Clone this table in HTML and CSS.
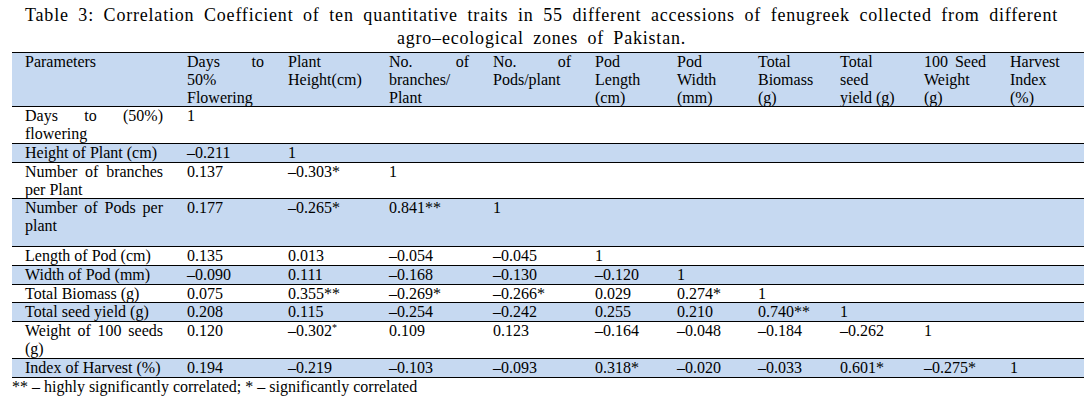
FILE: index.html
```html
<!DOCTYPE html>
<html lang="en">
<head>
<meta charset="utf-8">
<title>Table 3: Correlation Coefficient</title>
<link rel="stylesheet" href="styles.css">
</head>
<body>
<div class="title">
  <span class="title-l1">Table 3: Correlation Coefficient of ten quantitative traits in 55 different accessions of fenugreek collected from different</span>
  <span class="title-l2">agro–ecological zones of Pakistan.</span>
</div>
<table class="corr">
  <colgroup>
    <col class="c1"><col class="c2"><col class="c3"><col class="c4"><col class="c5"><col class="c6"><col class="c7"><col class="c8"><col class="c9"><col class="c10"><col class="c11">
  </colgroup>
  <thead>
    <tr class="shade">
      <th>Parameters</th>
      <th>Days to 50% Flowering</th>
      <th>Plant Height(cm)</th>
      <th>No. of branches/ Plant</th>
      <th>No. of Pods/plant</th>
      <th>Pod Length (cm)</th>
      <th>Pod Width (mm)</th>
      <th>Total Biomass (g)</th>
      <th>Total seed yield (g)</th>
      <th>100 Seed Weight (g)</th>
      <th>Harvest Index (%)</th>
    </tr>
  </thead>
  <tbody>
    <tr>
      <td>Days to (50%) flowering</td><td>1</td><td></td><td></td><td></td><td></td><td></td><td></td><td></td><td></td><td></td>
    </tr>
    <tr class="shade">
      <td>Height of Plant (cm)</td><td>–0.211</td><td>1</td><td></td><td></td><td></td><td></td><td></td><td></td><td></td><td></td>
    </tr>
    <tr>
      <td>Number of branches per Plant</td><td>0.137</td><td>–0.303*</td><td>1</td><td></td><td></td><td></td><td></td><td></td><td></td><td></td>
    </tr>
    <tr class="shade tall">
      <td>Number of Pods per plant</td><td>0.177</td><td>–0.265*</td><td>0.841**</td><td>1</td><td></td><td></td><td></td><td></td><td></td><td></td>
    </tr>
    <tr>
      <td>Length of Pod (cm)</td><td>0.135</td><td>0.013</td><td>–0.054</td><td>–0.045</td><td>1</td><td></td><td></td><td></td><td></td><td></td>
    </tr>
    <tr class="shade">
      <td>Width of Pod (mm)</td><td>–0.090</td><td>0.111</td><td>–0.168</td><td>–0.130</td><td>–0.120</td><td>1</td><td></td><td></td><td></td><td></td>
    </tr>
    <tr>
      <td>Total Biomass (g)</td><td>0.075</td><td>0.355**</td><td>–0.269*</td><td>–0.266*</td><td>0.029</td><td>0.274*</td><td>1</td><td></td><td></td><td></td>
    </tr>
    <tr class="shade">
      <td>Total seed yield (g)</td><td>0.208</td><td>0.115</td><td>–0.254</td><td>–0.242</td><td>0.255</td><td>0.210</td><td>0.740**</td><td>1</td><td></td><td></td>
    </tr>
    <tr>
      <td>Weight of 100 seeds (g)</td><td>0.120</td><td>–0.302<sup class="sup">*</sup></td><td>0.109</td><td>0.123</td><td>–0.164</td><td>–0.048</td><td>–0.184</td><td>–0.262</td><td>1</td><td></td>
    </tr>
    <tr class="shade">
      <td>Index of Harvest (%)</td><td>0.194</td><td>–0.219</td><td>–0.103</td><td>–0.093</td><td>0.318*</td><td>–0.020</td><td>–0.033</td><td>0.601*</td><td>–0.275*</td><td>1</td>
    </tr>
  </tbody>
</table>
<p class="note">** – highly significantly correlated; * – significantly correlated</p>
</body>
</html>
```
FILE: styles.css
```css
html, body {
  margin: 0;
  padding: 0;
  background: #ffffff;
}

body {
  font-family: "Liberation Serif", "Times New Roman", serif;
  color: #000000;
}

.title {
  margin: 4px 0 0 25px;
  width: 1033px;
  font-size: 18px;
  line-height: 23px;
  letter-spacing: 0.8px;
}

.title-l1 {
  display: block;
  white-space: nowrap;
  text-align: justify;
  text-align-last: justify;
}

.title-l2 {
  display: block;
  text-align: center;
  word-spacing: 4px;
}

.corr {
  margin: 2px 0 0 12px;
  width: 1072px;
  table-layout: fixed;
  border-collapse: collapse;
  font-size: 16px;
  line-height: 17.8px;
}

.c1 { width: 163px; }
.c2 { width: 101px; }
.c3 { width: 101px; }
.c4 { width: 104px; }
.c5 { width: 102px; }
.c6 { width: 82px; }
.c7 { width: 81px; }
.c8 { width: 82px; }
.c9 { width: 84px; }
.c10 { width: 86px; }
.c11 { width: 86px; }

.corr th,
.corr td {
  padding: 0 12px;
  vertical-align: top;
  text-align: justify;
  font-weight: normal;
  border-top: 1px solid #000000;
  border-bottom: 1px solid #000000;
}

.corr th:first-child,
.corr td:first-child {
  padding-left: 13px;
}

.shade th,
.shade td {
  background: #c6d9f1;
}

.tall td {
  padding-bottom: 11px;
}

.sup {
  font-size: 10px;
  line-height: 0;
  vertical-align: 5px;
}

.note {
  margin: 0 0 0 12px;
  font-size: 16px;
  line-height: 18px;
}
```
